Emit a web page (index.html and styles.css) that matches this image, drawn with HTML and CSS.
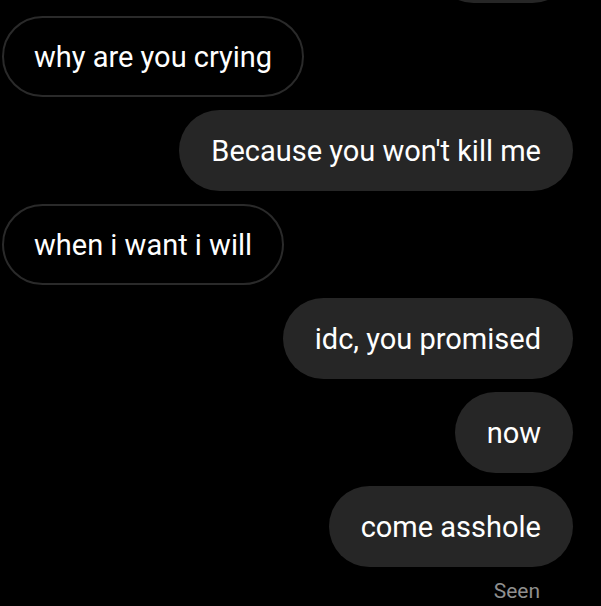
FILE: index.html
```html
<!DOCTYPE html>
<html lang="en">
<head>
<meta charset="utf-8">
<title>Chat</title>
<link rel="stylesheet" href="styles.css">
</head>
<body>
<main class="thread">
  <div class="bubble sent partial"></div>
  <div class="bubble received">why are you crying</div>
  <div class="bubble sent">Because you won't kill me</div>
  <div class="bubble received">when i want i will</div>
  <div class="bubble sent">idc, you promised</div>
  <div class="bubble sent">now</div>
  <div class="bubble sent">come asshole</div>
  <div class="seen">Seen</div>
</main>
</body>
</html>
```
FILE: styles.css
```css
html, body {
  margin: 0;
  padding: 0;
  background: #000;
}
body {
  width: 601px;
  height: 606px;
  overflow: hidden;
  font-family: Roboto, "Noto Sans", sans-serif;
}
.thread {
  display: flex;
  flex-direction: column;
  gap: 13px;
}
.bubble {
  box-sizing: border-box;
  height: 81px;
  border-radius: 41px;
  display: flex;
  align-items: center;
  padding: 0 32px 0 32px;
  font-size: 29px;
  color: #fff;
  white-space: nowrap;
}
.sent {
  align-self: flex-end;
  margin-right: 28px;
  background: #262626;
}
.received {
  align-self: flex-start;
  margin-left: 2px;
  border: 2px solid #2a2a2a;
  padding: 0 30px;
}
.partial {
  width: 140px;
  margin-top: -78px;
}
.seen {
  align-self: flex-end;
  margin-right: 61px;
  margin-top: -1px;
  font-size: 21px;
  color: #8f8f8f;
}
```
